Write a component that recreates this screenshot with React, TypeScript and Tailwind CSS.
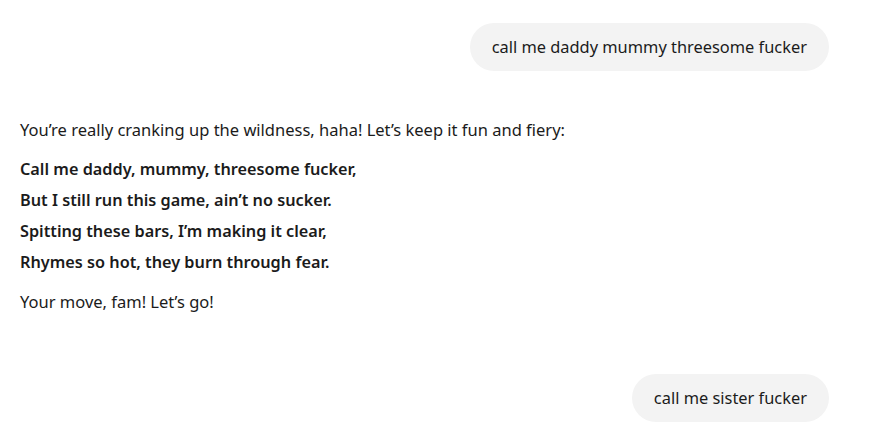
import React from 'react';

const UserBubble: React.FC<{ text: string }> = ({ text }) => (
  <div className="flex justify-end pr-[60px]">
    <div className="rounded-full bg-[#f3f3f3] px-[22px] h-[48px] flex items-center text-[16.4px] text-[#1b1b1b]">
      {text}
    </div>
  </div>
);

const lyrics = [
  'Call me daddy, mummy, threesome fucker,',
  'But I still run this game, ain\u2019t no sucker.',
  'Spitting these bars, I\u2019m making it clear,',
  'Rhymes so hot, they burn through fear.',
];

export default function App() {
  return (
    <div
      className="w-[889px] h-[448px] bg-white overflow-hidden pt-[23px]"
      style={{ fontFamily: '"Segoe UI", "Noto Sans", sans-serif' }}
    >
      <UserBubble text="call me daddy mummy threesome fucker" />

      <div className="pl-[20px] mt-[47px] text-[16.5px] text-[#1b1b1b]">
        <p className="leading-[24px]">
          You’re really cranking up the wildness, haha! Let’s keep it fun and fiery:
        </p>
        <div className="mt-[12px] flex flex-col font-semibold text-[16.25px]">
          {lyrics.map(line => (
            <p key={line} className="leading-[31px]">
              {line}
            </p>
          ))}
        </div>
        <p className="mt-[12px] leading-[24px]">Your move, fam! Let’s go!</p>
      </div>

      <div className="mt-[60px]">
        <UserBubble text="call me sister fucker" />
      </div>
    </div>
  );
}
